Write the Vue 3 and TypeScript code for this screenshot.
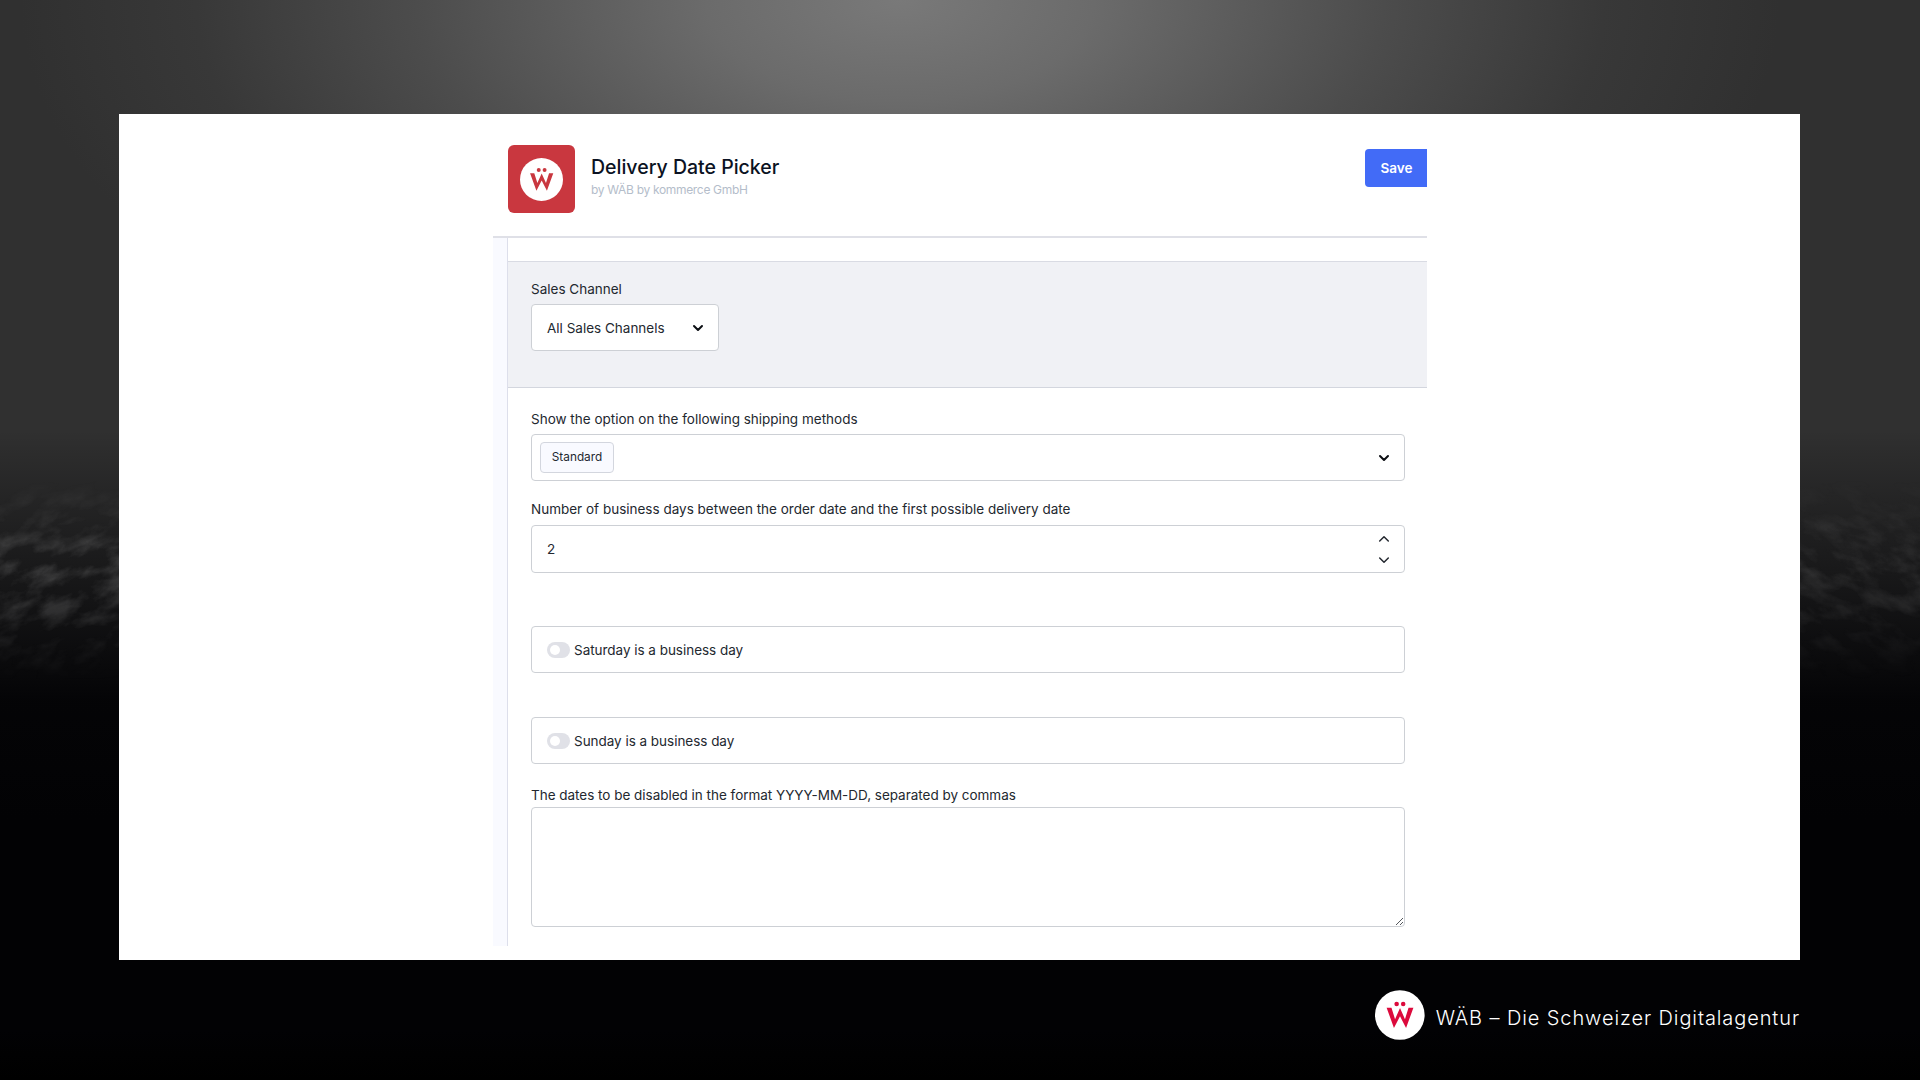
<script setup lang="ts">
import { ref } from 'vue'

interface DayToggle {
  label: string
  active: boolean
}

const businessDays = ref<number>(2)
const shippingMethods = ref<string[]>(['Standard'])
const disabledDates = ref<string>('')
const dayToggles = ref<DayToggle[]>([
  { label: 'Saturday is a business day', active: false },
  { label: 'Sunday is a business day', active: false },
])
</script>

<template>
  <div class="page">
    <svg class="backdrop" viewBox="0 0 1920 1080" aria-hidden="true">
      <defs>
        <filter id="rock" x="0" y="0" width="100%" height="100%">
          <feTurbulence type="fractalNoise" baseFrequency="0.03 0.06" numOctaves="6" seed="21" />
          <feColorMatrix values="0 0 0 0 0.25  0 0 0 0 0.25  0 0 0 0 0.25  2.4 0 0 0 -1" />
        </filter>
        <linearGradient id="fade" x1="0" y1="0" x2="0" y2="1">
          <stop offset="0" stop-color="#000" />
          <stop offset="0.4" stop-color="#ddd" />
          <stop offset="0.65" stop-color="#999" />
          <stop offset="1" stop-color="#000" />
        </linearGradient>
        <mask id="slopes"><rect x="-300" y="480" width="2500" height="200" fill="url(#fade)" /></mask>
      </defs>
      <g mask="url(#slopes)">
        <rect x="-100" y="430" width="300" height="330" filter="url(#rock)" transform="rotate(-24 60 590)" opacity=".42" />
        <rect x="1740" y="430" width="260" height="330" filter="url(#rock)" transform="rotate(18 1860 590)" opacity=".25" />
      </g>
    </svg>

    <main class="card">
      <div class="screen">
        <header class="header">
          <div class="app-icon">
            <svg viewBox="0 0 50 50" width="43" height="43">
              <circle cx="25" cy="25" r="25" fill="#fff" />
              <g fill="#c9373f">
                <circle cx="21.8" cy="14" r="2.3" />
                <circle cx="28.6" cy="14" r="2.3" />
                <path d="M11.7 17.7H16.6L20.2 29.2 25.2 18 30.2 29.2 33.8 17.7H38.7L31.3 38 25.2 26.2 19.1 38Z" />
              </g>
            </svg>
          </div>
          <div class="heading">
            <h1>Delivery Date Picker</h1>
            <p>by WÄB by kommerce GmbH</p>
          </div>
          <button class="save" type="button">Save</button>
        </header>

        <div class="body">
          <aside class="rail"></aside>
          <section class="content">
            <div class="channel">
              <div class="label">Sales Channel</div>
              <div class="box channel-select">
                <span>All Sales Channels</span>
                <svg class="chev" viewBox="0 0 12 8" width="12" height="8"><path d="M2 2l4 4 4-4" /></svg>
              </div>
            </div>

            <form class="form" @submit.prevent>
              <div class="label">Show the option on the following shipping methods</div>
              <div class="box methods">
                <span v-for="method in shippingMethods" :key="method" class="tag">{{ method }}</span>
                <svg class="chev" viewBox="0 0 12 8" width="12" height="8"><path d="M2 2l4 4 4-4" /></svg>
              </div>

              <div class="label label-days">Number of business days between the order date and the first possible delivery date</div>
              <div class="box number">
                <span>{{ businessDays }}</span>
                <div class="steps">
                  <svg viewBox="0 0 12 8" width="12" height="8"><path d="M1.7 6l4.3-4.2L10.3 6" /></svg>
                  <svg viewBox="0 0 12 8" width="12" height="8"><path d="M1.7 2l4.3 4.2L10.3 2" /></svg>
                </div>
              </div>

              <div v-for="day in dayToggles" :key="day.label" class="box day">
                <span class="switch" :class="{ on: day.active }"></span>
                <span>{{ day.label }}</span>
              </div>

              <div class="label label-dates">The dates to be disabled in the format YYYY-MM-DD, separated by commas</div>
              <div class="box dates">
                <span>{{ disabledDates }}</span>
                <svg class="grip" viewBox="0 0 10 10" width="10" height="10"><path d="M2 9l7-7M6 9l3-3" /></svg>
              </div>
            </form>
          </section>
        </div>
      </div>
    </main>

    <footer class="brand">
      <svg viewBox="0 0 50 50" width="50" height="50">
        <circle cx="25" cy="25" r="25" fill="#fff" />
        <g fill="#dc0a3c">
          <circle cx="21.8" cy="14" r="2.3" />
          <circle cx="28.4" cy="14" r="2.3" />
          <path d="M11.7 17.7H16.6L20.2 29.2 25.2 18 30.2 29.2 33.8 17.7H38.7L31.3 38 25.2 26.2 19.1 38Z" />
        </g>
      </svg>
      <span class="brand-name">WÄB – Die Schweizer Digitalagentur</span>
    </footer>
  </div>
</template>

<style>
body {
  background: #000;
}
</style>

<style scoped>
.page {
  position: relative;
  box-sizing: border-box;
  width: 1920px;
  height: 1080px;
  padding: 114px 120px 0 119px;
  overflow: hidden;
  font-family: Inter, "Liberation Sans", sans-serif;
  color: #23282f;
  background:
    linear-gradient(180deg, transparent 430px, rgba(2, 2, 4, 0.5) 570px, rgba(2, 2, 4, 0.95) 700px, #020204 820px, #020204 1030px, #000 1080px),
    radial-gradient(ellipse 880px 460px at 900px 0, #797979 0%, #6b6b6b 22%, #4c4c4c 55%, #383838 80%, #303030 100%);
}

.backdrop {
  position: absolute;
  inset: 0;
  width: 1920px;
  height: 1080px;
}

.card {
  position: relative;
  height: 846px;
  background: #fff;
}

.screen {
  display: flex;
  flex-direction: column;
  width: 934px;
  height: 832px;
  margin-left: 374px;
}

.header {
  display: flex;
  align-items: flex-start;
  box-sizing: border-box;
  height: 124px;
  padding: 31px 0 0 15px;
  border-bottom: 2px solid #dfe0e7;
}

.app-icon {
  display: flex;
  align-items: center;
  justify-content: center;
  width: 67px;
  height: 68px;
  border-radius: 6px;
  background: #c9373f;
}

.heading {
  flex: 1;
  margin: 10px 0 0 16px;
  white-space: nowrap;
}

h1 {
  margin: 0;
  font-size: 19.5px;
  line-height: 24px;
  font-weight: 500;
  color: #0b1222;
}

p {
  margin: 4px 0 0;
  font-size: 12px;
  line-height: 14px;
  letter-spacing: -0.32px;
  color: #b4bdca;
}

.save {
  width: 62px;
  height: 38px;
  margin-top: 4px;
  padding: 0 0 0 1px;
  border: 0;
  border-radius: 4px 0 0 4px;
  background: #426bf7;
  color: #fff;
  font: 600 13.5px Inter, sans-serif;
}

.body {
  display: flex;
  flex: 1;
}

.rail {
  width: 14px;
  background: #f9faff;
  border-right: 1px solid #dddfeb;
}

.content {
  flex: 1;
  padding-top: 23px;
}

.channel {
  box-sizing: border-box;
  height: 127px;
  padding: 17px 0 0 23px;
  border-top: 1px solid #d9dbe3;
  border-bottom: 1px solid #d3d6de;
  background: #f0f1f5;
}

.label {
  height: 20px;
  font-size: 13.5px;
  line-height: 20px;
  white-space: nowrap;
}

.box {
  display: flex;
  align-items: center;
  box-sizing: border-box;
  height: 47px;
  padding: 0 15px;
  border: 1px solid #cdd0d5;
  border-radius: 4px;
  background: #fff;
  font-size: 13.5px;
  white-space: nowrap;
}

.channel-select {
  justify-content: space-between;
  width: 188px;
  margin-top: 5px;
  padding-right: 14px;
}

.chev {
  fill: none;
  stroke: #0b0e13;
  stroke-width: 2;
  stroke-linecap: round;
  stroke-linejoin: round;
}

.form {
  width: 874px;
  margin: 21px 0 0 23px;
}

.methods {
  justify-content: space-between;
  margin-top: 5px;
  padding: 0 14px 0 8px;
}

.tag {
  box-sizing: border-box;
  width: 74px;
  height: 31px;
  border: 1px solid #d3d6de;
  border-radius: 4px;
  background: #f9faff;
  font-size: 11.8px;
  line-height: 29px;
  text-align: center;
}

.label-days {
  margin-top: 18px;
}

.number {
  justify-content: space-between;
  height: 48px;
  margin-top: 6px;
  padding-right: 14px;
}

.steps {
  display: flex;
  flex-direction: column;
  gap: 13px;
}

.steps svg {
  display: block;
  fill: none;
  stroke: #23282f;
  stroke-width: 1.5;
  stroke-linecap: round;
  stroke-linejoin: round;
}

.day {
  gap: 4px;
  height: 47px;
  margin-top: 44px;
  letter-spacing: -0.03px;
}

.number + .day {
  margin-top: 53px;
}

.switch {
  box-sizing: border-box;
  width: 23px;
  height: 16px;
  padding: 3px;
  border-radius: 8px;
  background: #e0e1e7;
}

.switch::before {
  content: "";
  display: block;
  width: 10px;
  height: 10px;
  border-radius: 50%;
  background: #fff;
}

.switch.on {
  padding-left: 10px;
  background: #426bf7;
}

.label-dates {
  margin-top: 21px;
  letter-spacing: -0.02px;
}

.dates {
  align-items: flex-end;
  justify-content: space-between;
  height: 120px;
  margin-top: 2px;
  padding: 0 0 0 15px;
}

.grip {
  fill: none;
  stroke: #55585d;
  stroke-width: 1;
}

.brand {
  position: relative;
  display: flex;
  align-items: center;
  gap: 11px;
  height: 50px;
  margin: 30px 0 0 1256px;
  color: #fff;
  white-space: nowrap;
}

.brand-name {
  padding-top: 5px;
  font-size: 20px;
  font-weight: 300;
  line-height: 28px;
  letter-spacing: 0.9px;
}
</style>
